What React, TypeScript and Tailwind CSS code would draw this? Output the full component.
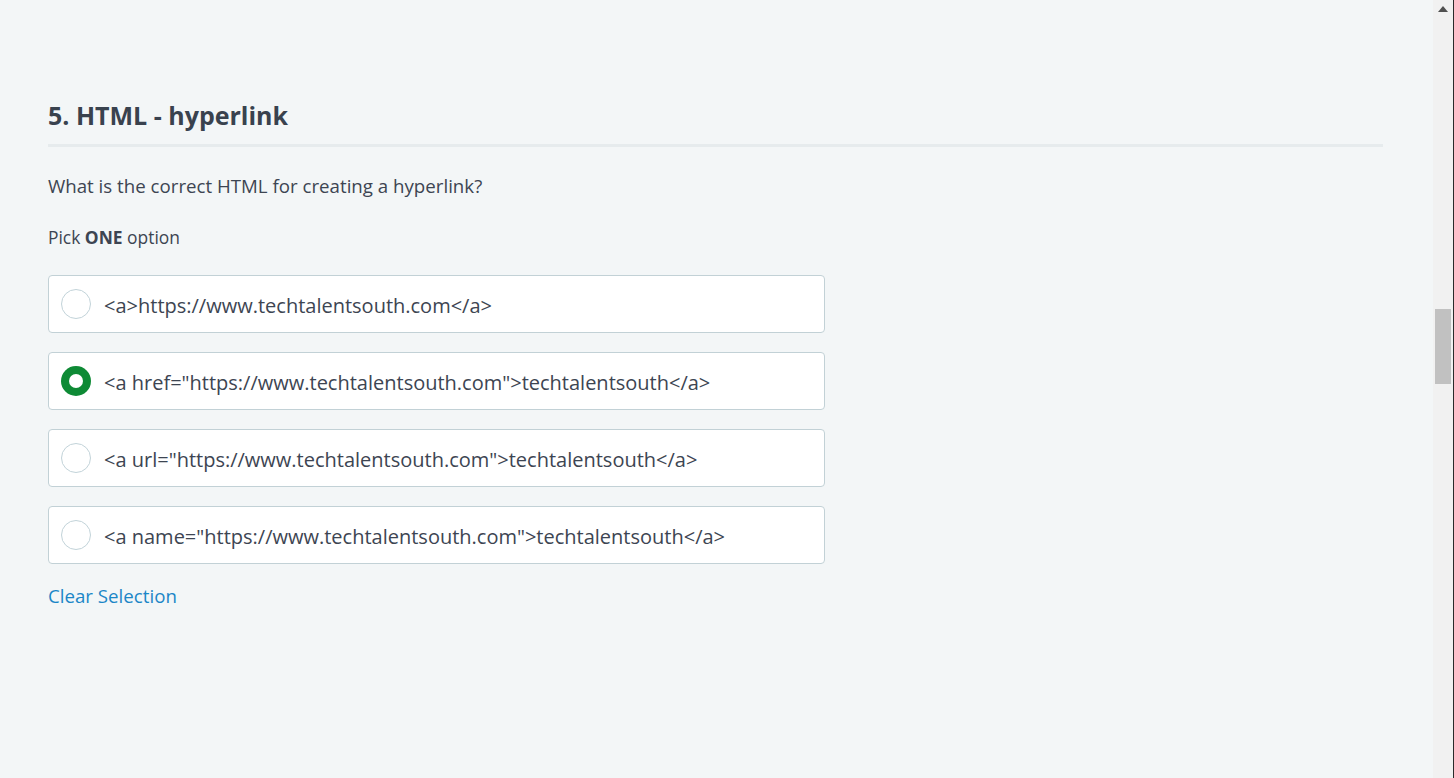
import { useState } from "react";

const options = [
  '<a>https://www.techtalentsouth.com</a>',
  '<a href="https://www.techtalentsouth.com">techtalentsouth</a>',
  '<a url="https://www.techtalentsouth.com">techtalentsouth</a>',
  '<a name="https://www.techtalentsouth.com">techtalentsouth</a>',
];

function Radio({ checked }: { checked: boolean }) {
  if (checked) {
    return (
      <span className="flex h-[30px] w-[30px] shrink-0 items-center justify-center rounded-full bg-[#0e8a35]">
        <span className="h-[14px] w-[14px] rounded-full bg-white" />
      </span>
    );
  }
  return <span className="h-[30px] w-[30px] shrink-0 rounded-full border border-[#c2d3d9] bg-white" />;
}

export default function App() {
  const [selected, setSelected] = useState<number | null>(1);

  return (
    <div className="flex h-[778px] w-full overflow-hidden bg-[#f3f6f7] font-['Open_Sans',sans-serif] text-[#3d4552]">
      <main className="flex-1 pl-[48px] pr-[50px] pt-[98px]">
        <h1 className="text-[25px] font-bold leading-[34px] text-[#39424e]">5. HTML - hyperlink</h1>
        <div className="mt-[12px] h-[3px] bg-[#e6ebed]" />
        <p className="mt-[26px] text-[18.7px] leading-[26px]">What is the correct HTML for creating a hyperlink?</p>
        <p className="mt-[25px] text-[17.4px] leading-[26px]">
          Pick <span className="font-bold">ONE</span> option
        </p>
        <div className="mt-[25px] flex w-[777px] flex-col gap-[19px]">
          {options.map((opt, i) => (
            <button
              key={i}
              onClick={() => setSelected(i)}
              className="flex h-[58px] items-center gap-[13px] rounded-[4px] border border-[#c2d1d6] bg-white pl-[12px] text-left text-[20px]"
            >
              <Radio checked={selected === i} />
              <span className="pt-[3px]">{opt}</span>
            </button>
          ))}
        </div>
        <button
          onClick={() => setSelected(null)}
          className="mt-[18px] text-[18.7px] leading-[28px] text-[#1b86c7]"
        >
          Clear Selection
        </button>
      </main>
      <div className="flex w-[21px] shrink-0 flex-col border-r border-[#2b2b2b] bg-[#f1f1f1]">
        <div className="flex h-[17px] items-center justify-center">
          <svg width="10" height="6" viewBox="0 0 10 6">
            <path d="M5 0 L10 6 L0 6 Z" fill="#505050" />
          </svg>
        </div>
        <div className="mx-[2px] mt-[292px] h-[75px] bg-[#c1c1c1]" />
      </div>
    </div>
  );
}
